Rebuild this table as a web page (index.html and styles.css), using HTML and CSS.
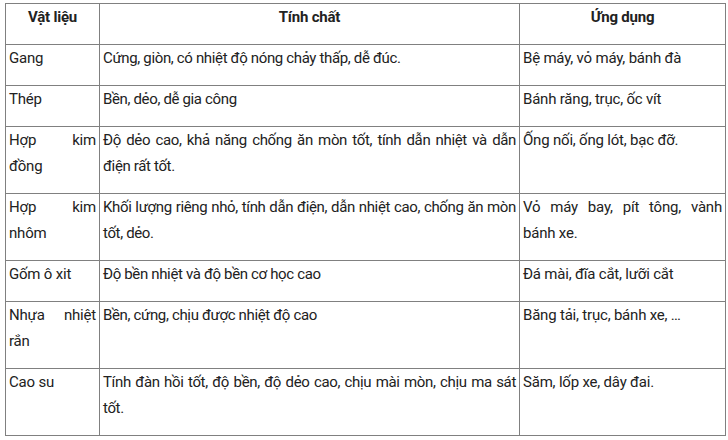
FILE: index.html
```html
<!DOCTYPE html>
<html lang="vi">
<head>
<meta charset="utf-8">
<link rel="stylesheet" href="styles.css">
</head>
<body>
<table class="tbl">
  <colgroup>
    <col class="c1"><col class="c2"><col class="c3">
  </colgroup>
  <thead>
    <tr><th>Vật liệu</th><th>Tính chất</th><th>Ứng dụng</th></tr>
  </thead>
  <tbody>
    <tr><td>Gang</td><td class="prop">Cứng, giòn, có nhiệt độ nóng chảy thấp, dễ đúc.</td><td>Bệ máy, vỏ máy, bánh đà</td></tr>
    <tr><td>Thép</td><td class="prop">Bền, dẻo, dễ gia công</td><td>Bánh răng, trục, ốc vít</td></tr>
    <tr><td>Hợp kim đồng</td><td class="prop">Độ dẻo cao, khả năng chống ăn mòn tốt, tính dẫn nhiệt và dẫn điện rất tốt.</td><td>Ống nối, ống lót, bạc đỡ.</td></tr>
    <tr><td>Hợp kim nhôm</td><td class="prop">Khối lượng riêng nhỏ, tính dẫn điện, dẫn nhiệt cao, chống ăn mòn tốt, dẻo.</td><td>Vỏ máy bay, pít tông, vành bánh xe.</td></tr>
    <tr><td>Gốm ô xit</td><td class="prop">Độ bền nhiệt và độ bền cơ học cao</td><td>Đá mài, đĩa cắt, lưỡi cắt</td></tr>
    <tr><td>Nhựa nhiệt rắn</td><td class="prop">Bền, cứng, chịu được nhiệt độ cao</td><td>Băng tải, trục, bánh xe, …</td></tr>
    <tr><td>Cao su</td><td class="prop">Tính đàn hồi tốt, độ bền, độ dẻo cao, chịu mài mòn, chịu ma sát tốt.</td><td>Săm, lốp xe, dây đai.</td></tr>
  </tbody>
</table>
</body>
</html>
```
FILE: styles.css
```css
html, body {
  margin: 0;
  padding: 0;
  background: #ffffff;
}
body {
  padding: 3px 0 0 5px;
  font-family: Roboto, "Liberation Sans", sans-serif;
  font-size: 15px;
  letter-spacing: -0.2px;
  color: #222222;
}
.tbl {
  border-collapse: collapse;
  table-layout: fixed;
  width: 720px;
}
.c1 { width: 94px; }
.c2 { width: 420px; }
.c3 { width: 206px; }
.tbl th, .tbl td {
  border: 1px solid #808080;
  vertical-align: top;
  line-height: 26px;
  padding: 0 3px 14px 3px;
}
.tbl th {
  font-weight: bold;
  text-align: center;
}
.tbl td {
  text-align: justify;
}
.tbl td.prop {
  letter-spacing: -0.35px;
}
```
